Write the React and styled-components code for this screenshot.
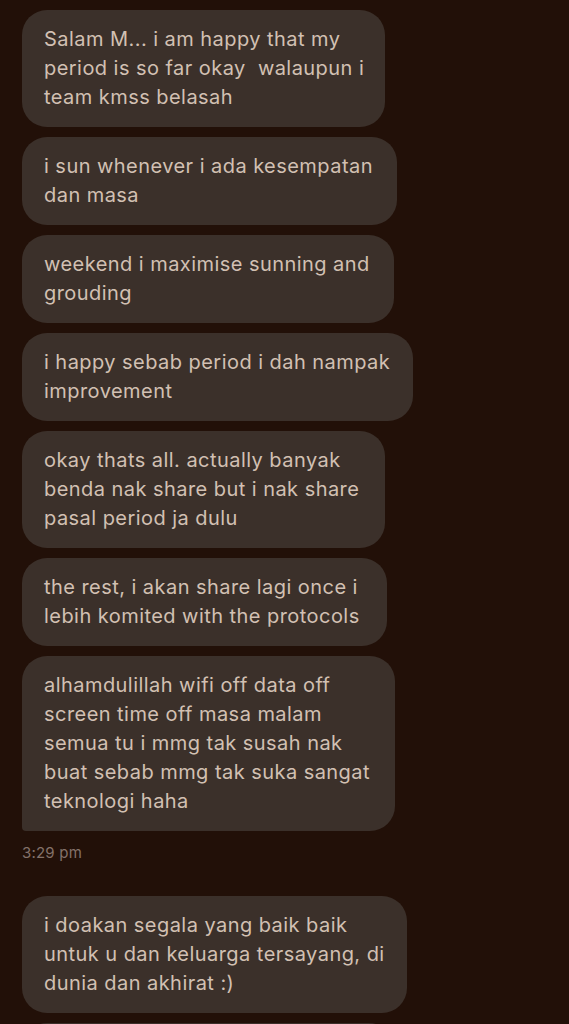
import React from 'react'
import styled, { createGlobalStyle } from 'styled-components'

const GlobalStyle = createGlobalStyle`
	html, body {
		margin: 0;
		padding: 0;
		background: #221008;
		overflow: hidden;
	}
	#root {
		height: 1024px;
		overflow: hidden;
	}
`

const Thread = styled.div`
	display: flex;
	flex-direction: column;
	align-items: flex-start;
	padding: 10px 22px 0;
	font-family: Inter, 'Liberation Sans', sans-serif;
`

const Group = styled.div`
	display: flex;
	flex-direction: column;
	align-items: flex-start;
	gap: 10px;
`

const LaterGroup = styled(Group)`
	margin-top: 34px;
`

const Bubble = styled.div`
	box-sizing: border-box;
	width: ${ props => props.$width }px;
	min-height: ${ props => props.$peek ? '60px' : 'auto' };
	padding: 15px 22px;
	background: #3b302a;
	border-radius: 25px;
	border-bottom-left-radius: ${ props => props.$tail ? '4px' : '25px' };
	color: #d2c0b3;
	font-size: 20px;
	line-height: 29px;
	letter-spacing: 0.45px;
	white-space: pre;
`

const Time = styled.div`
	margin-top: 13px;
	color: #84726a;
	font-size: 15px;
	line-height: 18px;
	letter-spacing: 0.2px;
`

const messages = [
	{ width: 363, text: 'Salam M... i am happy that my\nperiod is so far okay  walaupun i\nteam kmss belasah' },
	{ width: 375, text: 'i sun whenever i ada kesempatan\ndan masa' },
	{ width: 372, text: 'weekend i maximise sunning and\ngrouding' },
	{ width: 391, text: 'i happy sebab period i dah nampak\nimprovement' },
	{ width: 363, text: 'okay thats all. actually banyak\nbenda nak share but i nak share\npasal period ja dulu' },
	{ width: 365, text: 'the rest, i akan share lagi once i\nlebih komited with the protocols' },
	{ width: 373, text: 'alhamdulillah wifi off data off\nscreen time off masa malam\nsemua tu i mmg tak susah nak\nbuat sebab mmg tak suka sangat\nteknologi haha', tail: true },
]

const App = () => (
	<>
		<GlobalStyle />
		<Thread>
			<Group>
				{ messages.map((message, index) => (
					<Bubble key={ index } $width={ message.width } $tail={ message.tail }>
						{ message.text }
					</Bubble>
				)) }
			</Group>
			<Time>{ '3:29 pm' }</Time>
			<LaterGroup>
				<Bubble $width={ 385 }>
					{ 'i doakan segala yang baik baik\nuntuk u dan keluarga tersayang, di\ndunia dan akhirat :)' }
				</Bubble>
				<Bubble $width={ 372 } $peek />
			</LaterGroup>
		</Thread>
	</>
)

export default App
